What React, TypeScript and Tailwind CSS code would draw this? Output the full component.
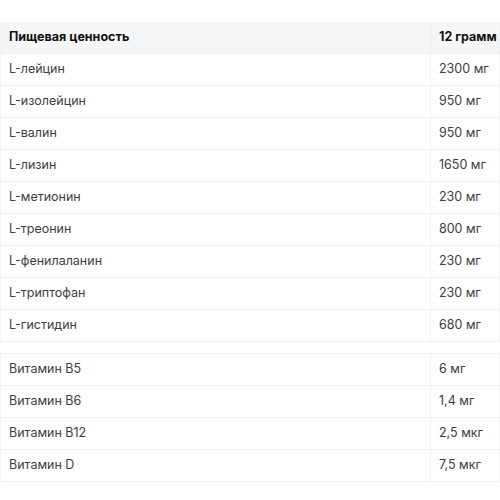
import React from "react";

const amino: [string, string][] = [
  ["L-лейцин", "2300 мг"],
  ["L-изолейцин", "950 мг"],
  ["L-валин", "950 мг"],
  ["L-лизин", "1650 мг"],
  ["L-метионин", "230 мг"],
  ["L-треонин", "800 мг"],
  ["L-фенилаланин", "230 мг"],
  ["L-триптофан", "230 мг"],
  ["L-гистидин", "680 мг"],
];

const vitamins: [string, string][] = [
  ["Витамин B5", "6 мг"],
  ["Витамин B6", "1,4 мг"],
  ["Витамин B12", "2,5 мкг"],
  ["Витамин D", "7,5 мкг"],
];

function Row({ a, b, head }: { a: string; b: string; head?: boolean }) {
  return (
    <div
      className={
        "flex h-[32px] border-b border-[#eef0f2] " +
        (head ? "bg-[#f5f6f8] font-bold text-[#111]" : "text-[#3d3d3d]")
      }
    >
      <div className="flex-1 flex items-center pl-2">{a}</div>
      <div className="w-[69px] flex items-center pl-2 border-l border-[#eef0f2]">{b}</div>
    </div>
  );
}

export default function App() {
  return (
    <div
      className="w-[500px] h-[500px] bg-white pt-[22px] text-[12.5px]"
      style={{ fontFamily: "Inter, 'Noto Sans', sans-serif" }}
    >
      <div className="border-l border-r border-[#f2f3f5]">
        <Row a="Пищевая ценность" b="12 грамм" head />
        {amino.map(([a, b]) => (
          <Row key={a} a={a} b={b} />
        ))}
      </div>
      <div className="mt-[11px] border-l border-r border-t border-[#f2f3f5]">
        {vitamins.map(([a, b]) => (
          <Row key={a} a={a} b={b} />
        ))}
      </div>
    </div>
  );
}
